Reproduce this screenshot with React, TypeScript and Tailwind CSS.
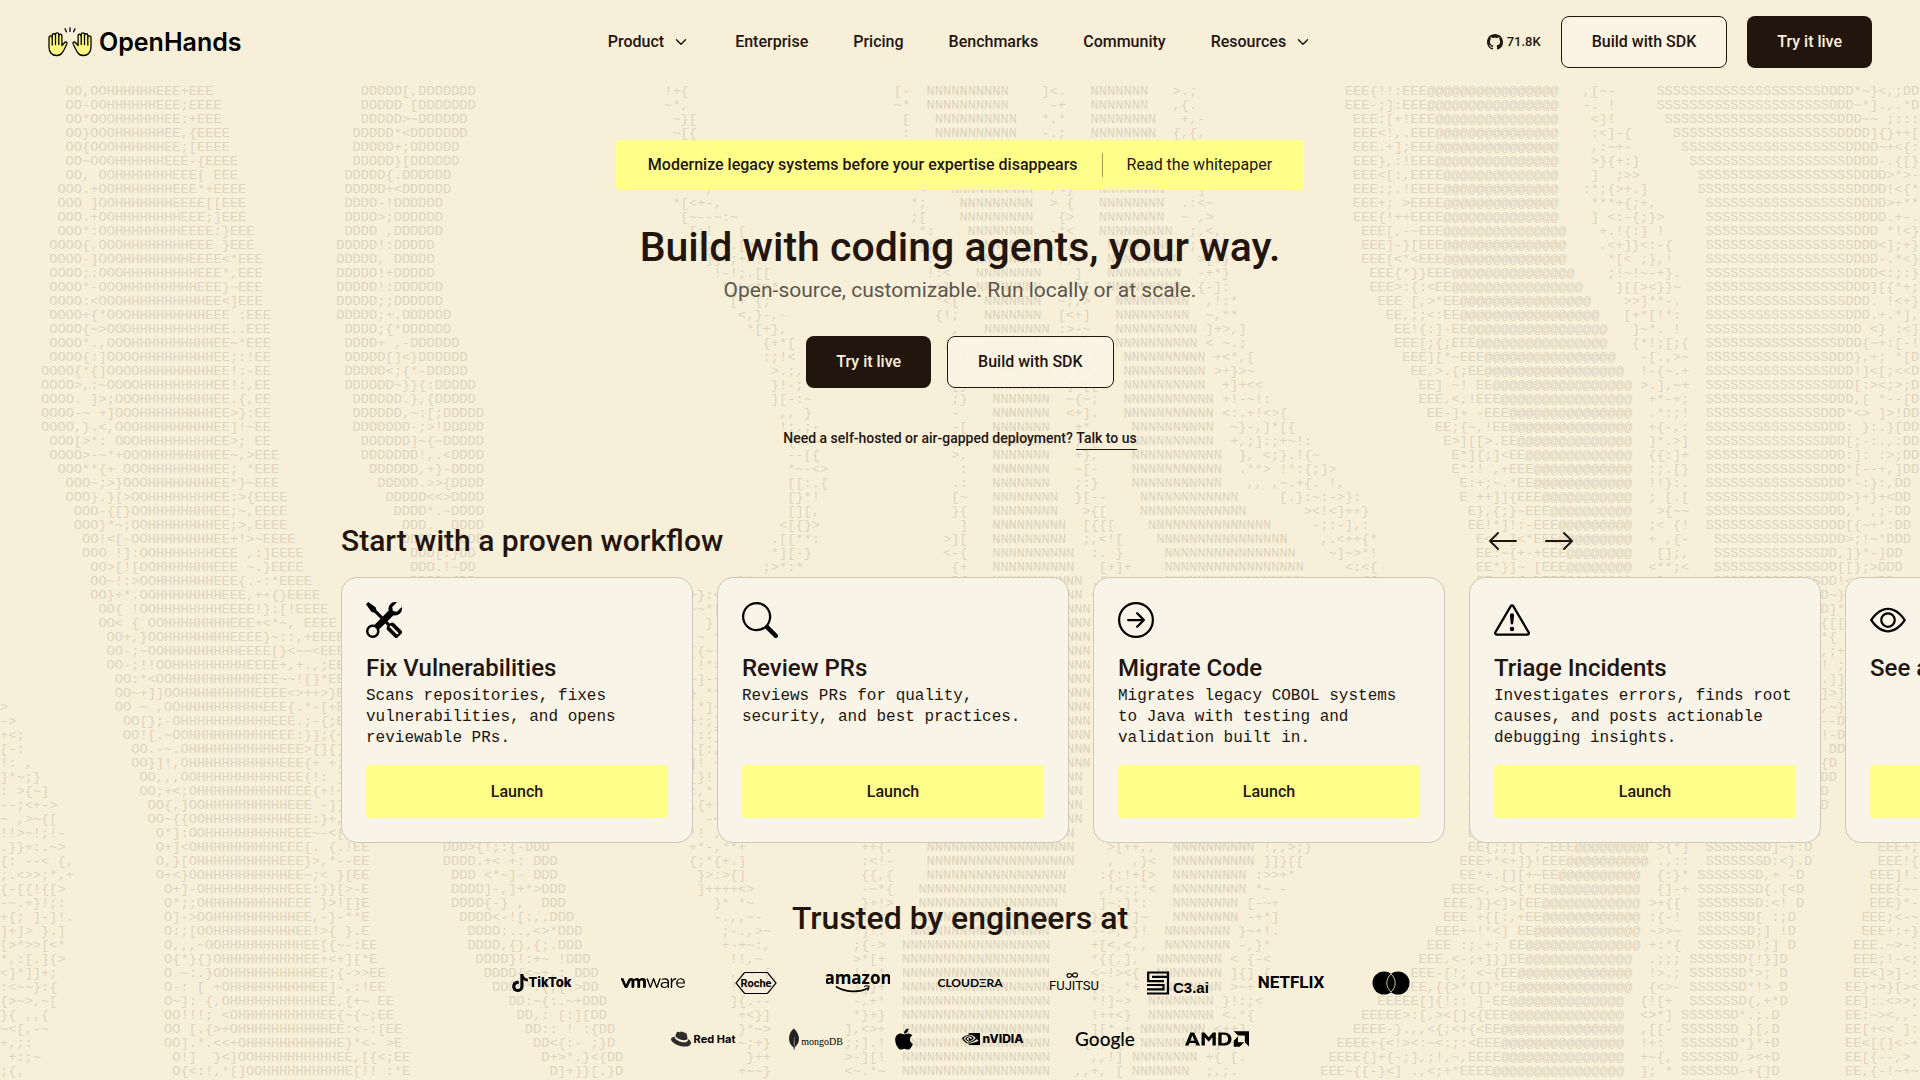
import type { ReactNode } from "react";
import type { IconType } from "react-icons";
import {
  BsArrowLeft,
  BsArrowRight,
  BsArrowRightCircle,
  BsExclamationTriangle,
  BsEye,
  BsGithub,
  BsSearch,
  BsTools,
} from "react-icons/bs";
import { FaApple, FaRedhat } from "react-icons/fa";
import {
  SiAmd,
  SiMongodb,
  SiNvidia,
  SiTiktok,
  SiVmware,
} from "react-icons/si";
import { ChevronDown } from "lucide-react";

/* ---------- background art ---------- */

// A band is a strip of characters running down the page. `fill` names the
// character of each segment ("?" = random punctuation) and every stop is
// [row, edge0, edge1, ...] in character columns.
interface Band {
  fill: string;
  stops: number[][];
}

const ROWS = 71;
const COLS = 235;
const NOISE = " .,:;!~-+*<>[]{}";

// cell size in the drawing's own units (10 per pixel on a 1920px window)
const CELL_WIDTH = 82;
const CELL_HEIGHT = 140;
const FIRST_BASELINE = 950;

const bands: Band[] = [
  {
    fill: "O?OHE?E",
    stops: [
      [0, 8, 10, 11, 13, 19, 22, 23, 26],
      [4, 8, 10, 11, 14, 20, 22, 24, 28],
      [8, 7, 10, 12, 14, 21, 25, 27, 30],
      [13, 6, 10, 12, 15, 24, 27, 29, 32],
      [18, 6, 10, 13, 16, 26, 28, 30, 33],
      [20, 5, 9, 13, 17, 26, 28, 31, 33],
      [24, 5, 9, 14, 17, 26, 28, 31, 33],
      [27, 7, 10, 15, 18, 26, 28, 31, 34],
      [31, 9, 12, 16, 18, 26, 28, 31, 35],
      [35, 11, 13, 17, 19, 26, 29, 34, 38],
      [40, 13, 15, 18, 20, 29, 33, 39, 43],
      [44, 14, 16, 20, 22, 32, 35, 41, 44],
      [48, 16, 18, 22, 23, 34, 37, 42, 45],
      [52, 18, 20, 23, 25, 35, 38, 42, 45],
      [54, 19, 20, 23, 24, 34, 37, 43, 45],
      [60, 20, 21, 24, 26, 36, 38, 44, 45],
      [64, 20, 21, 27, 28, 38, 40, 45, 47],
      [67, 20, 22, 28, 29, 40, 42, 47, 49],
      [70, 21, 22, 30, 32, 42, 43, 49, 50],
    ],
  },
  {
    fill: "D?D",
    stops: [
      [0, 44, 49, 51, 58],
      [4, 43, 48, 50, 56],
      [6, 42, 47, 49, 55],
      [9, 42, 46, 48, 54],
      [12, 41, 46, 48, 53],
      [15, 41, 46, 48, 54],
      [18, 42, 46, 50, 56],
      [20, 42, 47, 52, 57],
      [24, 43, 50, 54, 59],
      [27, 45, 51, 55, 59],
      [30, 48, 52, 55, 59],
      [34, 50, 53, 56, 58],
      [54, 54, 57, 64, 67],
      [58, 55, 59, 66, 69],
      [62, 58, 62, 69, 72],
      [67, 64, 66, 73, 75],
      [70, 67, 68, 75, 76],
    ],
  },
  {
    fill: "?",
    stops: [
      [44, 0, 1],
      [48, 0, 4],
      [50, 0, 6],
      [53, 0, 8],
      [56, 0, 9],
      [58, 0, 9],
      [60, 0, 8],
      [64, 0, 7],
      [68, 0, 5],
      [70, 0, 4],
    ],
  },
  {
    fill: "?",
    stops: [
      [0, 81, 84],
      [3, 82, 85],
      [8, 82, 88],
      [9, 83, 90],
      [13, 87, 94],
      [18, 92, 97],
      [25, 96, 100],
      [28, 96, 101],
      [30, 96, 100],
      [32, 94, 100],
      [34, 93, 98],
      [36, 84, 94],
      [53, 83, 90],
      [58, 86, 93],
      [62, 89, 94],
      [70, 90, 94],
    ],
  },
  {
    fill: "?",
    stops: [
      [0, 109, 111],
      [3, 110, 111],
      [8, 111, 113],
      [13, 113, 116],
      [20, 116, 118],
      [28, 116, 118],
      [34, 115, 118],
      [54, 105, 109],
      [62, 104, 108],
      [70, 103, 108],
    ],
  },
  {
    fill: "N",
    stops: [
      [0, 113, 123],
      [3, 114, 124],
      [8, 117, 126],
      [13, 119, 127],
      [20, 121, 128],
      [28, 121, 128],
      [32, 121, 130],
      [34, 121, 131],
      [38, 120, 133],
      [47, 117, 133],
      [54, 113, 131],
      [58, 112, 129],
      [61, 110, 128],
      [70, 110, 128],
    ],
  },
  {
    fill: "?",
    stops: [
      [0, 127, 130],
      [8, 128, 131],
      [16, 129, 133],
      [20, 130, 134],
      [28, 131, 134],
      [31, 132, 136],
      [34, 133, 138],
      [54, 135, 141],
      [60, 133, 140],
      [66, 133, 138],
      [70, 131, 137],
    ],
  },
  {
    fill: "N",
    stops: [
      [0, 133, 140],
      [8, 134, 142],
      [13, 135, 144],
      [20, 137, 147],
      [28, 138, 149],
      [30, 139, 152],
      [32, 141, 157],
      [34, 142, 159],
      [54, 143, 153],
      [58, 143, 151],
      [63, 141, 149],
      [67, 139, 147],
      [70, 138, 145],
    ],
  },
  {
    fill: "?",
    stops: [
      [0, 143, 146],
      [8, 144, 148],
      [13, 146, 150],
      [20, 148, 153],
      [22, 149, 155],
      [25, 150, 160],
      [28, 152, 164],
      [30, 159, 167],
      [34, 163, 168],
      [54, 154, 160],
      [58, 152, 156],
      [63, 150, 155],
      [70, 147, 151],
    ],
  },
  {
    fill: "E?E@",
    stops: [
      [0, 164, 167, 171, 174, 190],
      [3, 165, 168, 172, 175, 190],
      [8, 165, 168, 172, 176, 190],
      [12, 166, 169, 173, 176, 191],
      [14, 167, 170, 175, 177, 193],
      [16, 169, 171, 176, 178, 195],
      [18, 170, 173, 177, 180, 196],
      [20, 172, 174, 179, 181, 198],
      [22, 173, 176, 180, 183, 199],
      [25, 176, 177, 183, 185, 199],
      [30, 179, 180, 186, 189, 199],
      [34, 180, 182, 188, 191, 199],
      [54, 179, 181, 189, 192, 201],
      [57, 177, 180, 187, 189, 200],
      [60, 175, 178, 185, 187, 200],
      [63, 172, 175, 183, 185, 199],
      [65, 168, 173, 182, 184, 198],
      [68, 163, 167, 180, 183, 198],
      [70, 161, 164, 178, 182, 198],
    ],
  },
  {
    fill: "?",
    stops: [
      [0, 193, 197],
      [4, 194, 199],
      [7, 193, 201],
      [11, 195, 204],
      [14, 197, 205],
      [20, 200, 206],
      [24, 201, 206],
      [34, 201, 206],
      [54, 202, 206],
      [61, 201, 205],
      [67, 200, 204],
      [70, 200, 204],
    ],
  },
  {
    fill: "SD?D",
    stops: [
      [0, 202, 222, 226, 232, 235],
      [1, 202, 223, 226, 233, 235],
      [4, 205, 225, 229, 235, 235],
      [8, 208, 226, 230, 235, 235],
      [15, 208, 225, 228, 235, 235],
      [20, 208, 223, 226, 233, 235],
      [25, 208, 222, 225, 232, 234],
      [30, 208, 222, 225, 231, 233],
      [34, 209, 222, 224, 229, 232],
      [54, 208, 215, 216, 220, 221],
      [57, 207, 214, 215, 219, 220],
      [60, 207, 213, 214, 218, 219],
      [63, 206, 212, 213, 217, 218],
      [67, 205, 211, 212, 216, 217],
      [70, 205, 211, 212, 216, 217],
    ],
  },
  {
    fill: "E?",
    stops: [
      [52, 230, 233, 235],
      [54, 229, 232, 235],
      [57, 228, 231, 235],
      [62, 226, 229, 235],
      [64, 225, 227, 235],
      [70, 225, 227, 235],
    ],
  },
];

const noiseAt = (row: number, col: number) => {
  const n = Math.sin(row * 127.1 + col * 311.7) * 43758.5453;
  return NOISE[Math.floor((n - Math.floor(n)) * NOISE.length)];
};

const edgesAt = (stops: number[][], row: number) => {
  const next = stops.findIndex((stop) => stop[0] >= row);
  if (next === -1 || stops[0][0] > row) return null;
  if (stops[next][0] === row) return stops[next].slice(1);
  const a = stops[next - 1];
  const b = stops[next];
  const t = (row - a[0]) / (b[0] - a[0]);
  return a.slice(1).map((edge, i) => Math.round(edge + (b[i + 1] - edge) * t));
};

const artRuns = Array.from({ length: ROWS }, (_, row) => {
  const cells: string[] = Array(COLS).fill(" ");
  bands.forEach(({ fill, stops }) => {
    const edges = edgesAt(stops, row);
    if (!edges) return;
    [...fill].forEach((char, i) => {
      for (let col = edges[i]; col < edges[i + 1]; col++) {
        cells[col] = char === "?" ? noiseAt(row, col) : char;
      }
    });
  });
  // one run per stretch of text, so that blanks need not be drawn
  return [...cells.join("").matchAll(/\S+( \S+)*/g)].map((match) => ({
    row,
    col: match.index,
    text: match[0],
  }));
}).flat();

const BackgroundArt = () => (
  <svg
    aria-hidden="true"
    viewBox="0 0 19200 10800"
    preserveAspectRatio="xMinYMin slice"
    className="pointer-events-none absolute inset-0 h-full w-full select-none"
  >
    <g
      fill="#ddd5bf"
      className="font-['Liberation_Mono',monospace] text-[137px]"
    >
      {artRuns.map(({ row, col, text }) => (
        <text
          key={`${row}-${col}`}
          x={col * CELL_WIDTH}
          y={FIRST_BASELINE + row * CELL_HEIGHT}
        >
          {text}
        </text>
      ))}
    </g>
  </svg>
);

/* ---------- shared pieces ---------- */

interface ButtonProps {
  children: ReactNode;
}

const DarkButton = ({ children }: ButtonProps) => (
  <button className="h-[52px] rounded-lg bg-[#22150d] px-[30px] text-base font-medium text-[#f9f0da]">
    {children}
  </button>
);

const OutlineButton = ({ children }: ButtonProps) => (
  <button className="h-[52px] rounded-lg border border-[#22150d] bg-[#fbf4e4]/90 px-[30px] text-base font-medium">
    {children}
  </button>
);

const Hand = () => (
  <>
    <path
      fill="#fdf97f"
      d="M1 20v-9.6a1.6 1.6 0 0 1 3.2 0v-2a1.6 1.6 0 0 1 3.3 0v-.8a1.6 1.6 0 0 1 3.3 0v1.200a1.5 1.5 0 0 1 3.1 0v9.700l2.700-3c1.100-1.100 3-.2 2.300 1.300-1.500 2.900-2.500 5.600-4.400 8.500-1.300 2.100-3.200 3.200-5.800 3.200C4 28.500 1 25.200 1 20z"
    />
    <path fill="none" d="M4.2 10.400V18M7.500 8.400v9.100M10.800 8.400v9.100" />
  </>
);

const Logo = () => (
  <a href="#" className="flex items-center gap-[7px] text-black">
    <svg
      viewBox="0 0 44 30"
      className="h-[30px] w-11"
      stroke="#000"
      strokeWidth="1.3"
      strokeLinecap="round"
      strokeLinejoin="round"
    >
      <Hand />
      <g transform="translate(44 0) scale(-1 1)">
        <Hand />
      </g>
      <path d="M17 1.800l1.400 3M22 .8v3.600M27 1.800l-1.400 3" />
    </svg>
    <span className="font-[Inter,sans-serif] text-[25px] leading-8 font-semibold">
      OpenHands
    </span>
  </a>
);

/* ---------- header ---------- */

const navItems = [
  { label: "Product", menu: true },
  { label: "Enterprise" },
  { label: "Pricing" },
  { label: "Benchmarks" },
  { label: "Community" },
  { label: "Resources", menu: true },
];

const Header = () => (
  <header className="grid grid-cols-[1fr_auto_1fr] items-center px-12 py-4">
    <Logo />
    <nav className="flex items-center gap-[45px] text-base font-medium">
      {navItems.map(({ label, menu }) =>
        menu ? (
          <button key={label} className="flex items-center gap-2 font-medium">
            {label}
            <ChevronDown size={18} />
          </button>
        ) : (
          <a key={label} href="#">
            {label}
          </a>
        )
      )}
    </nav>
    <div className="flex items-center justify-end gap-5">
      <a
        href="#"
        className="flex items-center gap-1 text-[13px] font-medium"
      >
        <BsGithub size={16} />
        71.8K
      </a>
      <OutlineButton>Build with SDK</OutlineButton>
      <DarkButton>Try it live</DarkButton>
    </div>
  </header>
);

/* ---------- hero ---------- */

const Hero = () => (
  <section className="flex flex-col items-center pt-14 text-center">
    <a
      href="#"
      className="flex h-[50px] items-center rounded bg-[#ffff8a] px-8 text-base"
    >
      <span className="font-medium">
        Modernize legacy systems before your expertise disappears
      </span>
      <span className="mx-6 h-6 w-px bg-[#22150d]/40" />
      <span>Read the whitepaper</span>
    </a>
    <h1 className="mt-8 text-[41px] leading-[50px] font-medium">
      Build with coding agents, your way.
    </h1>
    <p className="mt-1 text-[21px] leading-7 text-[#5c564e]">
      Open-source, customizable. Run locally or at scale.
    </p>
    <div className="mt-8 flex gap-4">
      <DarkButton>Try it live</DarkButton>
      <OutlineButton>Build with SDK</OutlineButton>
    </div>
    <p className="mt-[39px] text-sm leading-[22px] font-medium">
      Need a self-hosted or air-gapped deployment?{" "}
      <a href="#" className="inline-block border-b border-[#22150d]">
        Talk to us
      </a>
    </p>
  </section>
);

/* ---------- workflows ---------- */

interface Workflow {
  title: string;
  text: string;
  icon: IconType;
}

const workflows: Workflow[] = [
  {
    title: "Fix Vulnerabilities",
    text: "Scans repositories, fixes vulnerabilities, and opens reviewable PRs.",
    icon: BsTools,
  },
  {
    title: "Review PRs",
    text: "Reviews PRs for quality, security, and best practices.",
    icon: BsSearch,
  },
  {
    title: "Migrate Code",
    text: "Migrates legacy COBOL systems to Java with testing and validation built in.",
    icon: BsArrowRightCircle,
  },
  {
    title: "Triage Incidents",
    text: "Investigates errors, finds root causes, and posts actionable debugging insights.",
    icon: BsExclamationTriangle,
  },
  { title: "See all", text: "", icon: BsEye },
];

const WorkflowCard = ({ title, text, icon: Icon }: Workflow) => (
  <article className="flex w-[352px] shrink-0 flex-col rounded-2xl border border-[#cdc8b9] bg-[#f9f4e8] p-6">
    <Icon size={36} className="text-black" />
    <h3 className="mt-4 text-2xl leading-7 font-medium">{title}</h3>
    <p className="mt-1 min-h-[63px] font-['Liberation_Mono',monospace] text-base leading-[21px]">
      {text}
    </p>
    <button className="mt-4 h-[53px] rounded bg-[#ffff8a] text-base font-medium">
      Launch
    </button>
  </article>
);

const Workflows = () => (
  <section className="mt-[65px] pl-[calc((100%-1238px)/2)]">
    <div className="flex w-[1238px] items-center justify-between">
      <h2 className="text-[30px] leading-[52px] font-medium">
        Start with a proven workflow
      </h2>
      <div className="flex gap-6 pr-1">
        <button aria-label="Previous">
          <BsArrowLeft size={32} />
        </button>
        <button aria-label="Next">
          <BsArrowRight size={32} />
        </button>
      </div>
    </div>
    <div className="mt-[10px] flex gap-6 overflow-hidden">
      {workflows.map((workflow) => (
        <WorkflowCard key={workflow.title} {...workflow} />
      ))}
    </div>
  </section>
);

/* ---------- customers ---------- */

interface BrandProps {
  width: string;
  children: ReactNode;
}

const Brand = ({ width, children }: BrandProps) => (
  <li
    className={`flex h-6 items-center justify-center whitespace-nowrap ${width}`}
  >
    {children}
  </li>
);

const Customers = () => (
  <section className="mt-[50px] flex flex-col items-center pb-6 text-black">
    <h2 className="text-[32px] leading-[50px] font-medium text-[#22150d]">
      Trusted by engineers at
    </h2>
    <ul className="mt-7 flex gap-12">
      <Brand width="w-16">
        <SiTiktok size={18} className="shrink-0" />
        <span className="font-[Inter,sans-serif] text-[13px] font-extrabold">
          TikTok
        </span>
      </Brand>
      <Brand width="w-16">
        <SiVmware size={64} className="shrink-0" />
      </Brand>
      <Brand width="w-[45px]">
        <svg viewBox="0 0 42 24" className="h-6 w-[42px]">
          <path
            d="M9.500 1.500h23L41 12l-8.500 10.500h-23L1 12z"
            fill="none"
            stroke="#000"
            strokeWidth="1.200"
          />
          <text
            x="21"
            y="16"
            textAnchor="middle"
            className="font-[Roboto,sans-serif] text-[11px] font-bold"
          >
            Roche
          </text>
        </svg>
      </Brand>
      <Brand width="w-16">
        <svg viewBox="0 0 64 24" className="h-6 w-16">
          <text
            x="32"
            y="13"
            textAnchor="middle"
            className="font-['Open_Sans',sans-serif] text-[17px] font-bold"
          >
            amazon
          </text>
          <path
            d="M10 15.500c9 6 23 6.500 32 1.500"
            fill="none"
            stroke="#000"
            strokeWidth="1.800"
          />
          <path
            d="M38 15.500c2-.9 4-.9 5 0 0 1.500-.6 3-1.500 4.200"
            fill="none"
            stroke="#000"
            strokeWidth="1.200"
          />
        </svg>
      </Brand>
      <Brand width="w-16">
        <span className="font-[Lato,sans-serif] text-[12px] font-bold">
          CLOUDΞRA
        </span>
      </Brand>
      <Brand width="w-[49px]">
        <svg viewBox="0 0 49 24" className="h-6 w-[49px]">
          <text
            x="24"
            y="19"
            textAnchor="middle"
            className="font-[Roboto,sans-serif] text-[13px]"
          >
            FUJITSU
          </text>
          <path
            d="M22 4.200c-1.800-2.600-5-1.900-5 .3s3.200 2.900 5 0c1.300-3.400 5.500-3.400 5.500-.4 0 2.500-3.700 2.800-5.500.1z"
            fill="none"
            stroke="#000"
            strokeWidth="1.200"
          />
        </svg>
      </Brand>
      <Brand width="w-16">
        <svg viewBox="0 0 64 24" className="h-6 w-16">
          <path
            d="M22 1.500H1.200v8.700H17M21 1v21.500H0M5 5.800h16M0 14h16.500v4.300H0"
            fill="none"
            stroke="#000"
            strokeWidth="2.200"
          />
          <text
            x="26"
            y="22"
            className="font-['Liberation_Sans',sans-serif] text-[15px] font-bold"
          >
            C3.ai
          </text>
        </svg>
      </Brand>
      <Brand width="w-16">
        <span className="font-[Roboto,sans-serif] text-[17px] font-bold">
          NETFLIX
        </span>
      </Brand>
      <Brand width="w-10">
        <svg viewBox="0 0 40 24" className="h-6 w-10">
          <circle cx="13" cy="12" r="11.500" />
          <circle cx="27" cy="12" r="11.500" />
          <path
            d="M20 3c5.600 5 5.600 13 0 18-5.600-5-5.600-13 0-18z"
            fill="none"
            stroke="#f8efd9"
            strokeWidth=".8"
          />
        </svg>
      </Brand>
    </ul>
    <ul className="mt-8 flex gap-12">
      <Brand width="w-16">
        <FaRedhat size={20} className="mr-[3px] shrink-0 text-[#2c2c2c]" />
        <span className="font-[Inter,sans-serif] text-[11px] font-bold">
          Red Hat
        </span>
      </Brand>
      <Brand width="w-16">
        <SiMongodb size={22} className="-mx-1 shrink-0 text-[#222]" />
        <span className="pt-1 font-['Liberation_Serif',serif] text-[10px]">
          mongoDB
        </span>
      </Brand>
      <Brand width="w-[18px]">
        <FaApple size={24} className="shrink-0" />
      </Brand>
      <Brand width="w-16">
        <SiNvidia size={18} className="mr-0.5 shrink-0" />
        <span className="font-[Inter,sans-serif] text-[12px] font-extrabold">
          nVIDIA
        </span>
      </Brand>
      <Brand width="w-16">
        <span className="font-[Lato,sans-serif] text-[19px] font-medium">
          Google
        </span>
      </Brand>
      <Brand width="w-16">
        <SiAmd size={64} className="shrink-0" />
      </Brand>
    </ul>
  </section>
);

export default function App() {
  return (
    <div className="relative min-h-screen overflow-hidden bg-[#f8efd9] font-[Roboto,sans-serif] text-[#22150d]">
      <BackgroundArt />
      <div className="relative">
        <Header />
        <main>
          <Hero />
          <Workflows />
          <Customers />
        </main>
      </div>
    </div>
  );
}
